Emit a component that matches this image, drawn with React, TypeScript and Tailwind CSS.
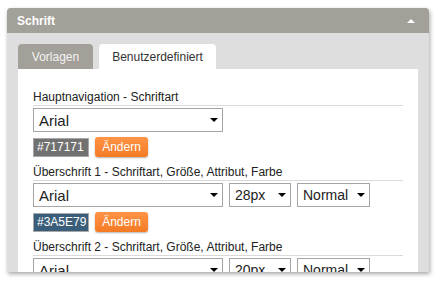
const font = { fontFamily: '"Liberation Sans", Arial, sans-serif' };

const Select = ({ value, width, size = "text-[15px]" }: { value: string; width: string; size?: string }) => (
  <div className={`${width} ${size} h-[24px] flex items-center justify-between border border-[#a5a5a5] bg-white pl-[5px] pr-[4px] text-[#222]`}>
    <span className="leading-none">{value}</span>
    <span className="w-0 h-0 border-l-[4px] border-r-[4px] border-t-[4px] border-l-transparent border-r-transparent border-t-black" />
  </div>
);

const ColorRow = ({ hex, bg }: { hex: string; bg: string }) => (
  <div className="flex items-center gap-[6px] mt-[5px] h-[20px]">
    <div className={`${bg} w-[56px] h-[19px] border border-[#a8a8a8] text-white text-[12px] leading-[17px] pl-[3px]`}>{hex}</div>
    <button className="h-[20px] w-[53px] rounded-[3px] bg-gradient-to-b from-[#ff9446] to-[#f47a22] text-white text-[12px] shadow-[0_1px_2px_rgba(0,0,0,0.3)]">Ändern</button>
  </div>
);

const Label = ({ text, top }: { text: string; top: string }) => (
  <div className={`${top} border-b border-[#dadada] text-[12px] leading-[15px] text-[#222]`}>{text}</div>
);

export default function App() {
  return (
    <div className="w-[444px] h-[290px] bg-white pt-[8px] pl-[7px]" style={font}>
      <div className="w-[422px] h-[264px] rounded-t-[4px] bg-[#dedede] overflow-hidden shadow-[1px_2px_4px_rgba(0,0,0,0.35)] flex flex-col">
        <div className="h-[25px] shrink-0 bg-[#a39f99] flex items-center justify-between pl-[10px] pr-[14px]">
          <span className="text-white font-bold text-[12px]">Schrift</span>
          <span className="w-0 h-0 border-l-[4px] border-r-[4px] border-b-[4px] border-l-transparent border-r-transparent border-b-white" />
        </div>
        <div className="px-[11px] pt-[11px] flex flex-col flex-1">
          <div className="flex gap-[6px] h-[25px] text-[12px]">
            <div className="w-[75px] rounded-t-[4px] bg-[#a39f99] text-[#f4f4f4] flex items-center justify-center">Vorlagen</div>
            <div className="w-[117px] rounded-t-[4px] bg-white text-[#333] flex items-center justify-center">Benutzerdefiniert</div>
          </div>
          <div className="bg-white flex-1 px-[15px] pt-[21px]">
            <Label text="Hauptnavigation - Schriftart" top="" />
            <div className="mt-[2px]">
              <Select value="Arial" width="w-[190px]" />
            </div>
            <ColorRow hex="#717171" bg="bg-[#717171]" />
            <Label text="Überschrift 1 - Schriftart, Größe, Attribut, Farbe" top="mt-[8px]" />
            <div className="flex gap-[6px] mt-[2px]">
              <Select value="Arial" width="w-[190px]" />
              <Select value="28px" width="w-[62px]" size="text-[14px]" />
              <Select value="Normal" width="w-[73px]" size="text-[14px]" />
            </div>
            <ColorRow hex="#3A5E79" bg="bg-[#3a5e79]" />
            <Label text="Überschrift 2 - Schriftart, Größe, Attribut, Farbe" top="mt-[8px]" />
            <div className="flex gap-[6px] mt-[2px]">
              <Select value="Arial" width="w-[190px]" />
              <Select value="20px" width="w-[62px]" size="text-[14px]" />
              <Select value="Normal" width="w-[73px]" size="text-[14px]" />
            </div>
          </div>
        </div>
      </div>
    </div>
  );
}
